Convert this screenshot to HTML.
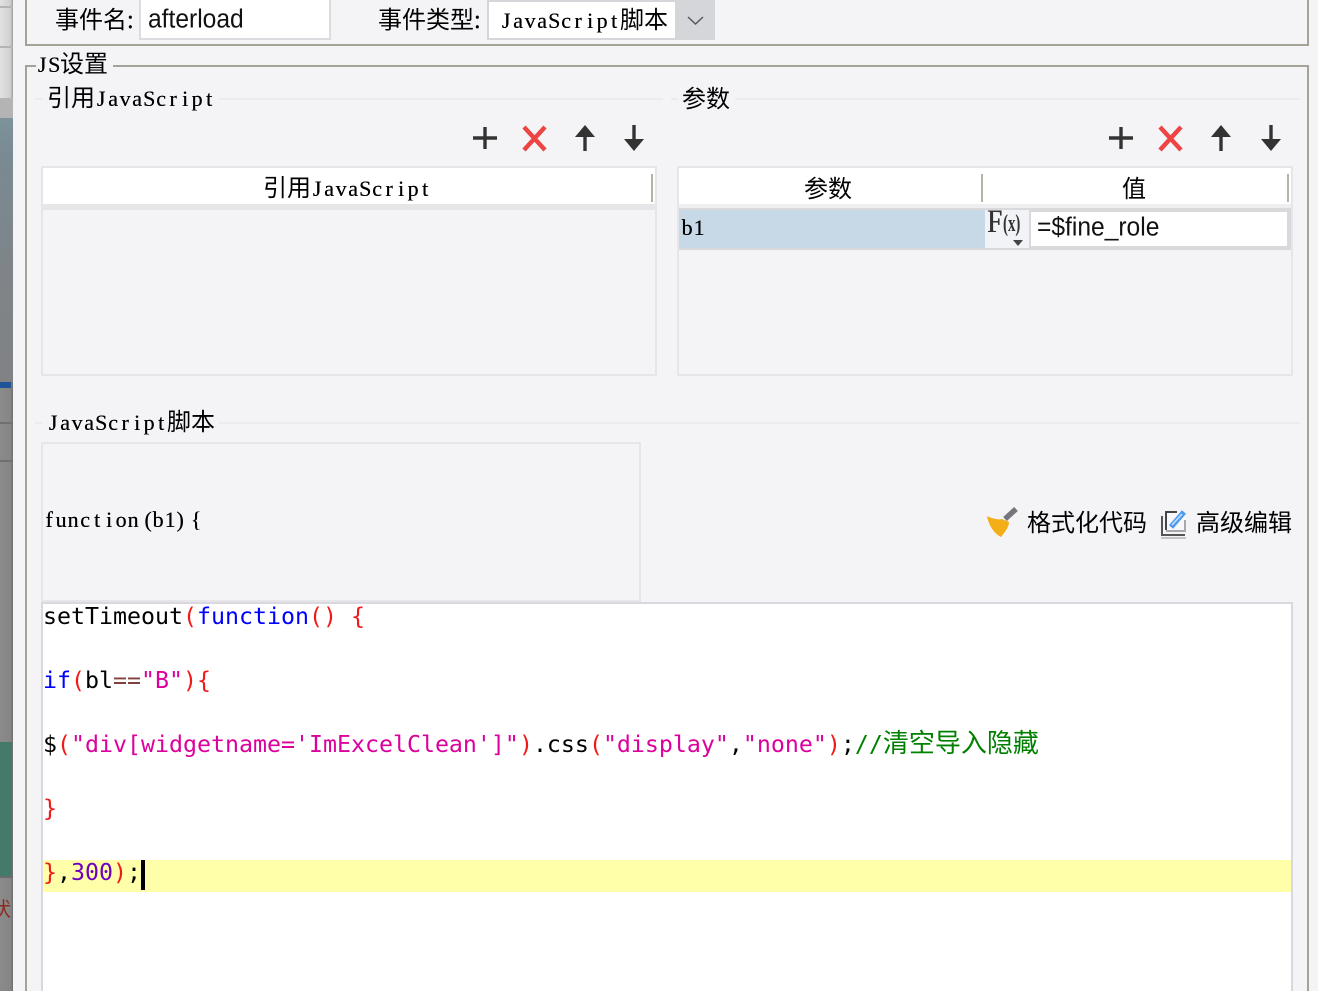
<!DOCTYPE html>
<html lang="zh">
<head>
<meta charset="utf-8">
<title>JS设置</title>
<style>
html,body{margin:0;padding:0;width:1318px;height:991px;overflow:hidden}
body{background:#f4f4f7;color:#000;font-family:"Liberation Sans","Noto Sans CJK SC",sans-serif}
#w{position:absolute;left:0;top:0;width:1318px;height:991px;overflow:hidden;background:#f4f4f7}
.a{position:absolute;display:block}
.t{position:absolute;white-space:nowrap;font-size:24px;line-height:30px;height:30px;font-family:"WenQuanYi Zen Hei","Noto Sans CJK SC",sans-serif}
.j i{display:inline-block;width:12px;text-align:center;font-style:normal;font-family:"Liberation Serif",serif;font-size:22px;line-height:0;font-weight:400;text-shadow:.3px 0 0 #000}
.sans{font-family:"Liberation Sans",sans-serif;font-size:24.6px;color:#111;transform:scaleY(1.05);transform-origin:0 50%}
.b{background:#a5a297}
.l{background:#ebebee;height:2px}
.code{position:absolute;left:43px;white-space:pre;height:32px;line-height:32px;font-size:23.25px;font-family:"DejaVu Sans Mono","WenQuanYi Zen Hei",monospace}
.code b{font-weight:400;font-family:"WenQuanYi Zen Hei","Noto Sans CJK SC",sans-serif;font-size:26px;line-height:0}
.k{color:#0000ff}.p{color:#f01818}.s{color:#dc009c}.n{color:#6f00c0}.o{color:#804040}.c{color:#008000}
svg{position:absolute;overflow:visible}
</style>
</head>
<body>
<div id="w">
<!-- left strip -->
<div class="a" style="left:0;top:0;width:13px;height:991px;background:linear-gradient(90deg,#8b8b8b,#858585 80%,#6e6e6e)"></div>
<div class="a" style="left:0;top:0;width:13px;height:98px;background:linear-gradient(90deg,#e2e2e2,#d0d0d0 80%,#9c9c9c)"></div>
<div class="a" style="left:0;top:6px;width:13px;height:2px;background:#b4b4b4"></div>
<div class="a" style="left:0;top:46px;width:13px;height:2px;background:#b4b4b4"></div>
<div class="a" style="left:0;top:98px;width:13px;height:20px;background:#b4b4b4"></div>
<div class="a" style="left:0;top:118px;width:13px;height:264px;background:linear-gradient(180deg,#7d929a,#7a8a92 15%,#7e8489 60%,#808285)"></div>
<div class="a" style="left:0;top:382px;width:11px;height:6px;background:#1f5499"></div>
<div class="a" style="left:0;top:742px;width:12px;height:134px;background:#437a6b"></div>
<div class="a" style="left:0;top:876px;width:13px;height:2px;background:#6b6b6f"></div>
<div class="a" style="left:0;top:422px;width:13px;height:2px;background:#707070"></div>
<div class="a" style="left:0;top:460px;width:13px;height:2px;background:#707070"></div>
<div class="t" style="left:-9px;top:893px;color:#8c2a22;font-size:20px">状</div>
<div class="a" style="left:13px;top:0;width:1px;height:991px;background:#f4f4f7"></div>

<!-- top panel -->
<div class="a b" style="left:25px;top:0;width:2px;height:46px"></div>
<div class="a b" style="left:25px;top:44px;width:1284px;height:2px"></div>
<div class="a b" style="left:1307px;top:0;width:2px;height:46px"></div>
<div class="t" style="left:55px;top:3px">事件名:</div>
<div class="a" style="left:139px;top:-2px;width:188px;height:38px;background:#fff;border:2px solid #dcdce0"></div>
<div class="t sans" style="left:148px;top:5px">afterload</div>
<div class="t" style="left:378px;top:3px">事件类型:</div>
<div class="a" style="left:487px;top:0;width:228px;height:40px;background:#d5d6da"></div>
<div class="a" style="left:489px;top:2px;width:186px;height:36px;background:#fff"></div>
<div class="t j" style="left:500px;top:3px"><i>J</i><i>a</i><i>v</i><i>a</i><i>S</i><i>c</i><i>r</i><i>i</i><i>p</i><i>t</i>脚本</div>
<svg style="left:687px;top:15px" width="18" height="12" viewBox="0 0 18 12"><path d="M1 2 L8.500 9 L16 2" fill="none" stroke="#55585c" stroke-width="1.500"/></svg>

<!-- JS panel -->
<div class="a b" style="left:25px;top:65px;width:2px;height:926px"></div>
<div class="a b" style="left:1307px;top:65px;width:2px;height:926px"></div>
<div class="a b" style="left:25px;top:65px;width:11px;height:2px"></div>
<div class="a b" style="left:113px;top:65px;width:1196px;height:2px"></div>
<div class="t j" style="left:36px;top:47px"><i>J</i><i>S</i>设置</div>

<!-- sub headings -->
<div class="a l" style="left:35px;top:98px;width:7px"></div>
<div class="a l" style="left:219px;top:98px;width:444px"></div>
<div class="t j" style="left:47px;top:81px">引用<i>J</i><i>a</i><i>v</i><i>a</i><i>S</i><i>c</i><i>r</i><i>i</i><i>p</i><i>t</i></div>
<div class="a l" style="left:671px;top:98px;width:7px"></div>
<div class="a l" style="left:735px;top:98px;width:565px"></div>
<div class="t" style="left:682px;top:82px">参数</div>

<!-- toolbar left -->
<svg style="left:470px;top:122px" width="180" height="32" viewBox="0 0 180 32">
<path d="M15 5V27M3 16H27" stroke="#333" stroke-width="3.400" fill="none"/>
<path d="M54 5L75 28M75 5L54 28" stroke="#ee4444" stroke-width="4.400" fill="none"/>
<path d="M115 12V29" stroke="#333" stroke-width="3.400"/><path d="M105 15L115 3L125 15Z" fill="#333"/>
<path d="M164 3V20" stroke="#333" stroke-width="3.400"/><path d="M154 17H174L164 29Z" fill="#333"/>
</svg>
<!-- toolbar right -->
<svg style="left:1106px;top:122px" width="180" height="32" viewBox="0 0 180 32">
<path d="M15 5V27M3 16H27" stroke="#333" stroke-width="3.400" fill="none"/>
<path d="M54 5L75 28M75 5L54 28" stroke="#ee4444" stroke-width="4.400" fill="none"/>
<path d="M115 12V29" stroke="#333" stroke-width="3.400"/><path d="M105 15L115 3L125 15Z" fill="#333"/>
<path d="M165 3V20" stroke="#333" stroke-width="3.400"/><path d="M155 17H175L165 29Z" fill="#333"/>
</svg>

<!-- left table -->
<div class="a" style="left:41px;top:166px;width:612px;height:206px;border:2px solid #e6e6ea"></div>
<div class="a" style="left:43px;top:168px;width:612px;height:36px;background:#fff"></div>
<div class="a" style="left:43px;top:204px;width:612px;height:6px;background:#e6e6e8"></div>
<div class="a" style="left:651px;top:174px;width:2px;height:28px;background:#b5b3aa"></div>
<div class="t j" style="left:263px;top:171px">引用<i>J</i><i>a</i><i>v</i><i>a</i><i>S</i><i>c</i><i>r</i><i>i</i><i>p</i><i>t</i></div>

<!-- right table -->
<div class="a" style="left:677px;top:166px;width:612px;height:206px;border:2px solid #e6e6ea"></div>
<div class="a" style="left:679px;top:168px;width:612px;height:36px;background:#fff"></div>
<div class="a" style="left:981px;top:174px;width:2px;height:28px;background:#b5b3aa"></div>
<div class="a" style="left:1287px;top:174px;width:2px;height:28px;background:#b5b3aa"></div>
<div class="t" style="left:804px;top:172px">参数</div>
<div class="t" style="left:1122px;top:172px">值</div>
<div class="a" style="left:679px;top:204px;width:612px;height:4px;background:#eeeef0"></div>
<div class="a" style="left:679px;top:208px;width:612px;height:42px;background:#d9d9db"></div>
<div class="a" style="left:679px;top:210px;width:306px;height:38px;background:#c7d9e7"></div>
<div class="a" style="left:985px;top:210px;width:44px;height:38px;background:#f2f3f6"></div>
<div class="a" style="left:1031px;top:212px;width:256px;height:34px;background:#fff"></div>
<div class="t j" style="left:681px;top:210px"><i>b</i><i>1</i></div>
<div class="t" style="left:987px;top:205px;font-family:'Liberation Serif',serif;font-size:33px;color:#333;transform:scaleX(.82);transform-origin:0 0;line-height:34px;text-shadow:.6px 0 0 #333">F</div>
<div class="t" style="left:1003px;top:209px;font-family:'Liberation Serif',serif;font-size:24px;line-height:30px;color:#333;font-weight:700;transform:scaleX(.62);transform-origin:0 0">(x)</div>
<svg style="left:1013px;top:240px" width="10" height="6" viewBox="0 0 10 6"><path d="M0 0H10L5 6Z" fill="#444"/></svg>
<div class="t sans" style="left:1037px;top:213px">=$fine_role</div>

<!-- JavaScript script -->
<div class="a l" style="left:35px;top:422px;width:7px"></div>
<div class="a l" style="left:219px;top:422px;width:1081px"></div>
<div class="t j" style="left:47px;top:405px"><i>J</i><i>a</i><i>v</i><i>a</i><i>S</i><i>c</i><i>r</i><i>i</i><i>p</i><i>t</i>脚本</div>
<div class="a" style="left:41px;top:442px;width:596px;height:156px;border:2px solid #e6e6ea"></div>
<div class="t j" style="left:43px;top:502px"><i>f</i><i>u</i><i>n</i><i>c</i><i>t</i><i>i</i><i>o</i><i>n</i></div>
<div class="t j" style="left:144px;top:502px"><i style="width:8px">(</i><i>b</i><i>1</i><i style="width:8px">)</i></div>
<div class="t j" style="left:190px;top:502px"><i>{</i></div>

<!-- broom icon -->
<svg style="left:982px;top:503px" width="40" height="40" viewBox="0 0 40 40">
<path d="M23 16L34 6" stroke="#74767c" stroke-width="5.500"/>
<path d="M5 13C11 16 17 17 20 16L27 19C27 24 23 29 19 34C13 31 7 24 5 13Z" fill="#f4ae18"/>
</svg>
<div class="t" style="left:1027px;top:506px">格式化代码</div>
<!-- edit icon -->
<svg style="left:1155px;top:503px" width="40" height="40" viewBox="0 0 40 40">
<path d="M7 13V32H30" fill="none" stroke="#555" stroke-width="2"/>
<path d="M6 33H31" stroke="#c4c4c8" stroke-width="2" transform="translate(0 2)"/>
<path d="M11 9H31V28H11Z" fill="#f8f8fb"/>
<path d="M11 27V9H22" fill="none" stroke="#454545" stroke-width="2"/>
<path d="M11 28H30V17" fill="none" stroke="#a8a8ac" stroke-width="2"/>
<path d="M16 24L29 9" stroke="#4f9bf0" stroke-width="5.500"/>
<path d="M17 22L27 11" stroke="#c6e0fb" stroke-width="1.600"/>
</svg>
<div class="t" style="left:1196px;top:506px">高级编辑</div>

<!-- code editor -->
<div class="a" style="left:41px;top:602px;width:1248px;height:400px;background:#fff;border:2px solid #d8d8de"></div>
<div class="a" style="left:43px;top:860px;width:1248px;height:32px;background:#ffffaa"></div>
<div class="a" style="left:141px;top:860px;width:4px;height:30px;background:#000"></div>
<div class="code" style="top:601px">setTimeout<span class="p">(</span><span class="k">function</span><span class="p">()</span> <span class="p">{</span></div>
<div class="code" style="top:665px"><span class="k">if</span><span class="p">(</span>bl<span class="o">==</span><span class="s">"B"</span><span class="p">){</span></div>
<div class="code" style="top:729px">$<span class="p">(</span><span class="s">"div[widgetname='ImExcelClean']"</span><span class="p">)</span>.css<span class="p">(</span><span class="s">"display"</span>,<span class="s">"none"</span><span class="p">)</span>;<span class="c">//<b>清空导入隐藏</b></span></div>
<div class="code" style="top:793px"><span class="p">}</span></div>
<div class="code" style="top:857px"><span class="p">}</span>,<span class="n">300</span><span class="p">)</span>;</div>
</div>
</body>
</html>
